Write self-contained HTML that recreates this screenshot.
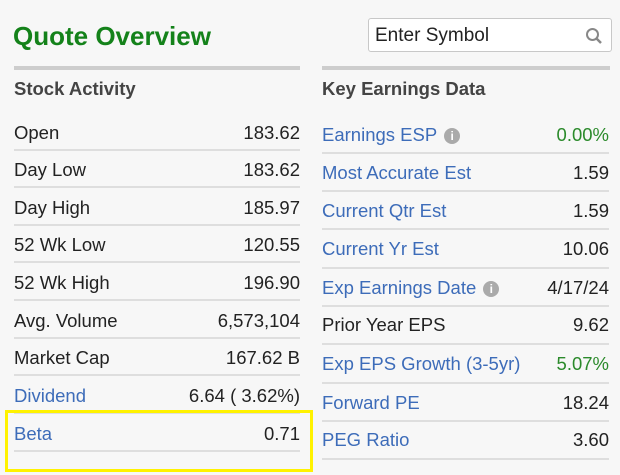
<!DOCTYPE html>
<html><head><style>
body{margin:0;width:620px;height:475px;background:#f7f7f7;font-family:"Liberation Sans",sans-serif;position:relative;overflow:hidden;color:#222}
.a{position:absolute}
h1{position:absolute;left:13px;top:21px;margin:0;font-size:26px;font-weight:bold;color:#14821a}
.inp{left:368px;top:18px;width:244px;height:34px;border:1px solid #c8c8c8;border-radius:3px;background:#fff;font-size:19px;line-height:34px;box-sizing:border-box;padding-left:6px;color:#222}
.bar{height:4px;background:#cdcdcd;top:66px}
.hd{font-size:18.5px;font-weight:bold;color:#444;top:78px}
.row{position:absolute;height:37px;font-size:18.5px;line-height:37px;border-bottom:2px solid #dedede;box-sizing:border-box}
.row .v{position:absolute;right:0;top:0}
.L{left:14px;width:286px}
.R{left:322px;width:287px}
.b{color:#3d6cb9}.g{color:#2b8a2b}
.i{display:inline-block;width:16px;height:16px;border-radius:50%;background:#aaa;color:#fff;font-size:12px;font-weight:bold;line-height:16px;text-align:center;vertical-align:1px;margin-left:7px}
.y{left:5px;top:410px;width:302px;height:56px;border:3px solid #fff200}
</style></head><body>
<h1>Quote Overview</h1>
<div class="a inp">Enter Symbol
<svg class="a" style="right:8px;top:8px" width="18" height="18" viewBox="0 0 18 18"><circle cx="7.5" cy="7.5" r="5.5" fill="none" stroke="#888" stroke-width="2"/><line x1="11.5" y1="11.5" x2="16" y2="16" stroke="#888" stroke-width="2.5"/></svg></div>
<div class="a bar" style="left:14px;width:286px"></div>
<div class="a bar" style="left:322px;width:288px"></div>
<div class="a hd" style="left:14px">Stock Activity</div>
<div class="a hd" style="left:322px">Key Earnings Data</div>

<div class="row L" style="top:114px">Open<span class="v">183.62</span></div>
<div class="row L" style="top:151px">Day Low<span class="v">183.62</span></div>
<div class="row L" style="top:189px">Day High<span class="v">185.97</span></div>
<div class="row L" style="top:226px">52 Wk Low<span class="v">120.55</span></div>
<div class="row L" style="top:264px">52 Wk High<span class="v">196.90</span></div>
<div class="row L" style="top:302px">Avg. Volume<span class="v">6,573,104</span></div>
<div class="row L" style="top:339px">Market Cap<span class="v">167.62 B</span></div>
<div class="row L b" style="top:377px">Dividend<span class="v" style="color:#222">6.64 ( 3.62%)</span></div>
<div class="row L b" style="top:415px">Beta<span class="v" style="color:#222">0.71</span></div>
<div class="a y"></div>

<div class="row R b" style="top:115px;height:39px;line-height:39px">Earnings ESP<span class="i">i</span><span class="v g">0.00%</span></div>
<div class="row R b" style="top:154px;height:38px;line-height:38px">Most Accurate Est<span class="v" style="color:#222">1.59</span></div>
<div class="row R b" style="top:192px;height:38px;line-height:38px">Current Qtr Est<span class="v" style="color:#222">1.59</span></div>
<div class="row R b" style="top:230px;height:39px;line-height:37px">Current Yr Est<span class="v" style="color:#222">10.06</span></div>
<div class="row R b" style="top:269px;height:38px;line-height:38px">Exp Earnings Date<span class="i">i</span><span class="v" style="color:#222">4/17/24</span></div>
<div class="row R" style="top:307px;height:38px;line-height:36px">Prior Year EPS<span class="v">9.62</span></div>
<div class="row R b" style="top:345px;height:39px;line-height:37px">Exp EPS Growth (3-5yr)<span class="v g">5.07%</span></div>
<div class="row R b" style="top:384px;height:38px;line-height:37px">Forward PE<span class="v" style="color:#222">18.24</span></div>
<div class="row R b" style="top:422px;height:38px;line-height:36px">PEG Ratio<span class="v" style="color:#222">3.60</span></div>
</body></html>
